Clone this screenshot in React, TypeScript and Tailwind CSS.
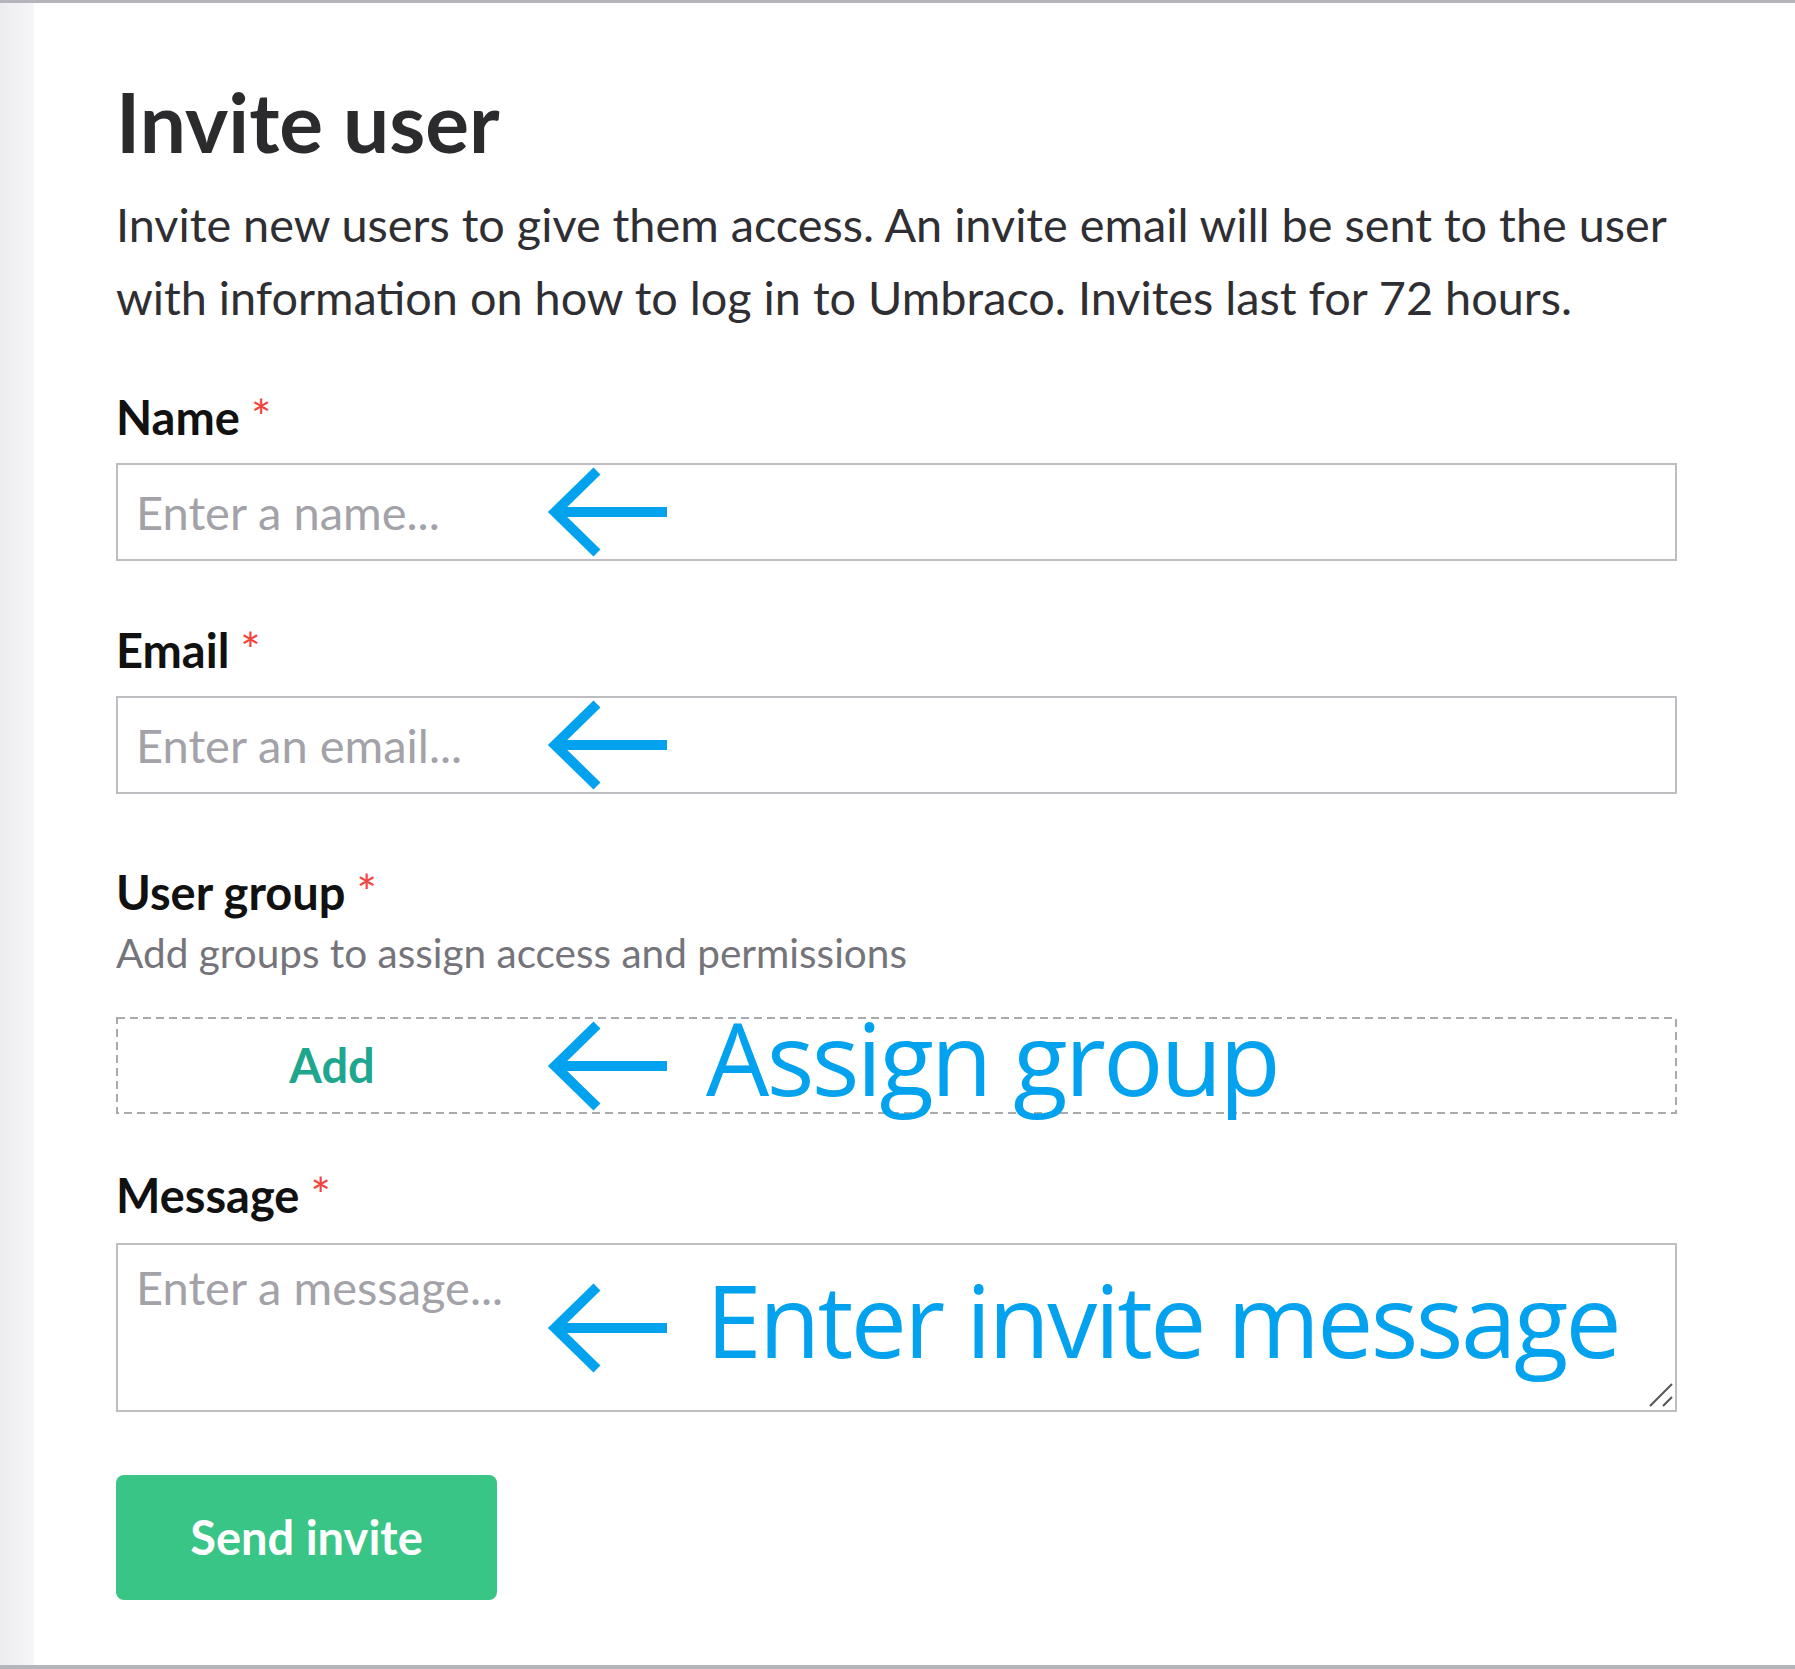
import React from 'react';

const ui = { fontFamily: 'Lato, "Open Sans", sans-serif' };
const note = { fontFamily: '"Open Sans", "Noto Sans", sans-serif' };

// blue arrow used in the annotations
const Arrow = () => (
  <svg width="120" height="90" viewBox="0 0 120 90" className="shrink-0">
    <path d="M50 4 L8 45 L50 86 M8 45 L120 45" fill="none" stroke="#03a2ee" strokeWidth="10" strokeLinejoin="miter" />
  </svg>
);

const Annotation = ({ text }: { text?: string }) => (
  <div className="pointer-events-none absolute inset-y-0 left-[431px] flex items-center">
    <Arrow />
    {text && (
      <span style={note} className="ml-[39px] mb-[18px] whitespace-nowrap text-[100px] leading-[100px] tracking-[-2.6px] text-[#03a2ee]">
        {text}
      </span>
    )}
  </div>
);

const Label = ({ children, className = '' }: { children: React.ReactNode; className?: string }) => (
  <div className={`text-[47px] leading-[52px] font-bold text-[#111] ${className}`}>
    {children}
    <span className="ml-[11px] inline-block align-top pt-[4px] text-[48px] leading-[44px] font-normal text-[#f2443d]">*</span>
  </div>
);

export default function App() {
  return (
    <div style={ui} className="flex h-[1669px] w-full border-t-[3px] border-b-[4px] border-[#b4b4bd] bg-white">
      <div className="w-[34px] shrink-0 bg-gradient-to-r from-[#ececee] to-[#f6f6f8]" />
      <div className="flex-1 pl-[82px] pr-[118px] pt-[76px]">
        <h1 className="text-[82px] leading-[84px] font-bold text-[#2b2b2e]">Invite user</h1>
        <p className="mt-[25px] text-[46.8px] leading-[73px] text-[#2f2f33]">
          <span className="block whitespace-nowrap">Invite new users to give them access. An invite email will be sent to the user</span>
          <span className="block whitespace-nowrap">with information on how to log in to Umbraco. Invites last for 72 hours.</span>
        </p>

        <Label className="mt-[57px]">Name</Label>
        <div className="relative mt-[20px]">
          <input
            placeholder="Enter a name..."
            className="block h-[98px] w-full border-2 border-[#bdbdc2] px-[18px] text-[47px] text-[#222] outline-none placeholder:text-[#a2a2a8]"
          />
          <Annotation />
        </div>

        <Label className="mt-[63px]">Email</Label>
        <div className="relative mt-[20px]">
          <input
            placeholder="Enter an email..."
            className="block h-[98px] w-full border-2 border-[#bdbdc2] px-[18px] text-[47px] text-[#222] outline-none placeholder:text-[#a2a2a8]"
          />
          <Annotation />
        </div>

        <Label className="mt-[72px]">User group</Label>
        <div className="mt-[11px] text-[40.5px] leading-[48px] text-[#74747a]">Add groups to assign access and permissions</div>
        <div className="relative mt-[40px] h-[97px]">
          <svg className="absolute inset-0 h-full w-full" preserveAspectRatio="none">
            <rect x="1" y="1" width="calc(100% - 2px)" height="95" fill="none" stroke="#a9a9ae" strokeWidth="2" strokeDasharray="8 5" />
          </svg>
          <div className="flex h-full w-[432px] items-center justify-center text-[47px] font-bold text-[#1fa68e]">Add</div>
          <Annotation text="Assign group" />
        </div>

        <Label className="mt-[55px]">Message</Label>
        <div className="relative mt-[22px]">
          <textarea
            placeholder="Enter a message..."
            className="block h-[169px] w-full resize-none border-2 border-[#bdbdc2] px-[18px] pt-[14px] text-[47px] leading-[1.2] text-[#222] outline-none placeholder:text-[#a2a2a8]"
          />
          <svg className="pointer-events-none absolute bottom-[4px] right-[4px]" width="26" height="26" viewBox="0 0 26 26">
            <path d="M3 24 L25 2 M16 24 L25 15" stroke="#555" strokeWidth="2" />
          </svg>
          <Annotation text="Enter invite message" />
        </div>

        <button className="mt-[63px] flex h-[125px] w-[381px] items-center justify-center rounded-[8px] bg-[#38c585] text-[47px] font-bold text-white">
          Send invite
        </button>
      </div>
    </div>
  );
}
